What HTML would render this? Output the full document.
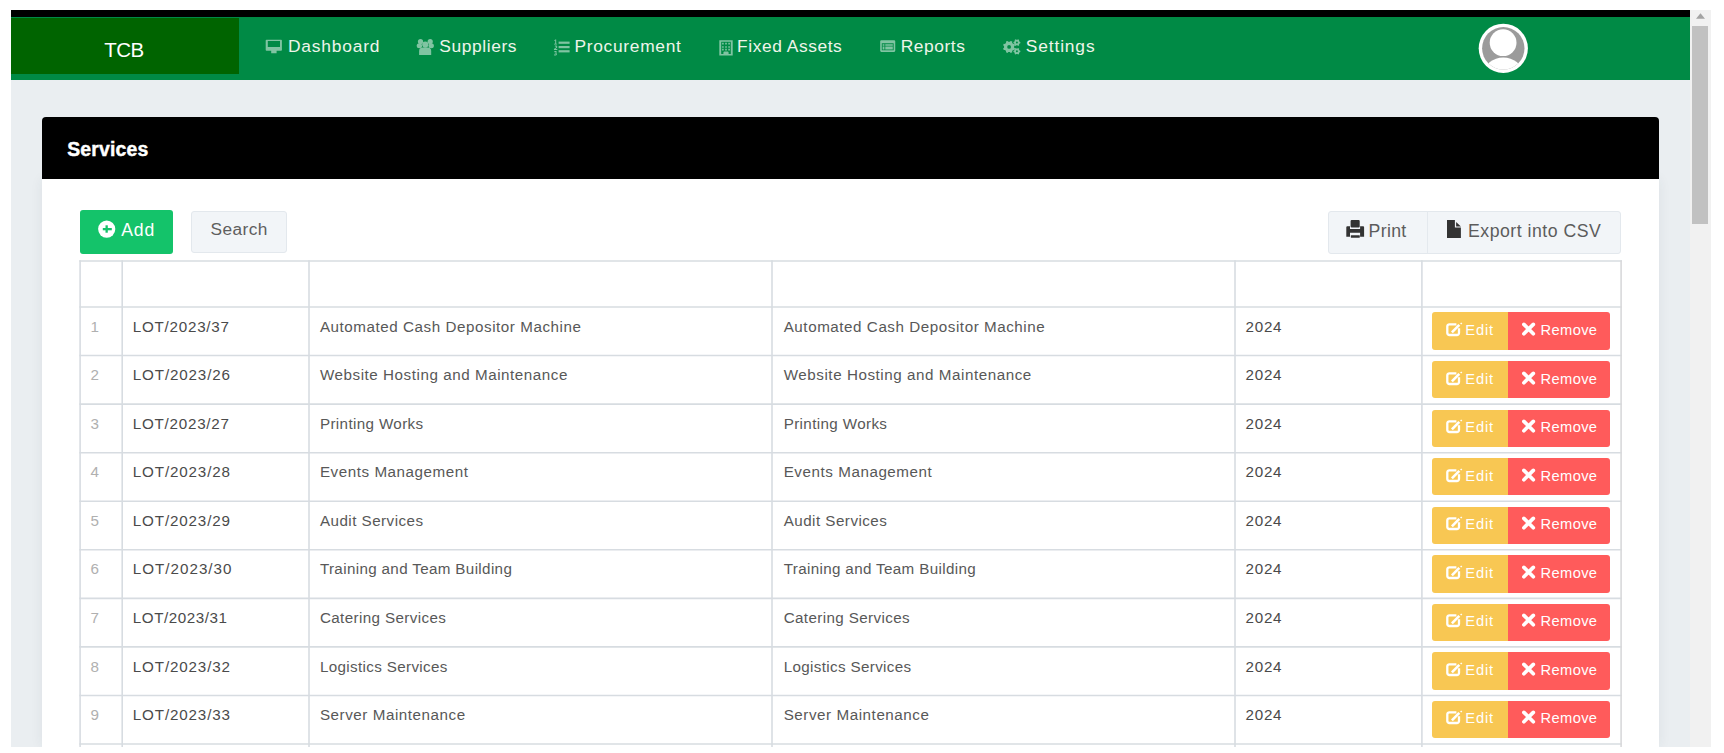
<!DOCTYPE html>
<html><head><meta charset="utf-8"><title>Services</title>
<style>
html,body{margin:0;padding:0;background:#fff;}
body{width:1724px;height:753px;overflow:hidden;position:relative;font-family:"Liberation Sans",sans-serif;}
.b{position:absolute;box-sizing:content-box;}
.t{position:absolute;white-space:nowrap;line-height:1;}
</style></head><body>
<div style="position:absolute;left:11px;top:10px;width:1700px;height:737px;overflow:hidden"><div style="position:absolute;left:-11px;top:-10px;width:1724px;height:753px">
<div class="b" style="left:11px;top:10px;width:1679px;height:7px;background:#000"></div>
<div class="b" style="left:11px;top:17px;width:1679px;height:62.5px;background:#008a45"></div>
<div class="b" style="left:11px;top:18px;width:227.5px;height:56px;background:#006400"></div>
<div class="t" style="left:104.20px;top:40.35px;font-size:20.5px;color:#ffffff;letter-spacing:-0.45px;font-weight:400;">TCB</div>
<div class="t" style="left:288.00px;top:38.07px;font-size:17.4px;color:#eef5ea;letter-spacing:0.8px;font-weight:400;">Dashboard</div>
<div class="t" style="left:439.20px;top:38.07px;font-size:17.4px;color:#eef5ea;letter-spacing:0.6px;font-weight:400;">Suppliers</div>
<div class="t" style="left:574.50px;top:38.07px;font-size:17.4px;color:#eef5ea;letter-spacing:0.68px;font-weight:400;">Procurement</div>
<div class="t" style="left:737.10px;top:38.07px;font-size:17.4px;color:#eef5ea;letter-spacing:0.55px;font-weight:400;">Fixed Assets</div>
<div class="t" style="left:900.70px;top:38.07px;font-size:17.4px;color:#eef5ea;letter-spacing:0.55px;font-weight:400;">Reports</div>
<div class="t" style="left:1025.80px;top:38.07px;font-size:17.4px;color:#eef5ea;letter-spacing:0.85px;font-weight:400;">Settings</div>
<svg class="b" style="opacity:0.5;left:265px;top:39px" width="18" height="16" viewBox="0 0 18 16"><path fill="#fff" fill-rule="evenodd" d="M1.5 0.8h14.6a0.8 0.8 0 0 1 0.8 0.8v9.4a0.8 0.8 0 0 1-0.8 0.8H11.6v2.4H6.2v-2.4H1.5a0.8 0.8 0 0 1-0.8-0.8V1.6a0.8 0.8 0 0 1 0.8-0.8zM2.8 2.1v5.9h12.2V2.1z"/></svg>
<svg class="b" style="opacity:0.5;left:410px;top:34px" width="30" height="24" viewBox="0 0 30 24"><g fill="#fff"><circle cx="10.5" cy="7.5" r="2.6"/><circle cx="20.2" cy="7.5" r="2.6"/><ellipse cx="9.4" cy="11.7" rx="2.7" ry="2.5"/><ellipse cx="21.2" cy="11.7" rx="2.7" ry="2.5"/><circle cx="15.3" cy="10.6" r="3.1"/><path d="M9.1 20.9V17.1a3.5 3.5 0 0 1 3.5-3.5h5.1a3.5 3.5 0 0 1 3.5 3.5v3.8z"/></g></svg>
<svg class="b" style="opacity:0.5;left:553px;top:39px" width="18" height="17" viewBox="0 0 18 17"><g fill="#fff"><rect x="5.6" y="2.6" width="11" height="2.2"/><rect x="5.6" y="7" width="11" height="2.2"/><rect x="5.6" y="11.2" width="11" height="2.2"/><path d="M1.2 1.3l1.2-0.8h0.8v4.3h0.9v0.8H1v-0.8h1.2V1.6l-0.9 0.5z" /><path d="M0.9 10.5c0-1.3 2.4-1.6 2.4-2.5 0-0.6-0.8-0.6-1.1-0.3l-0.6-0.7c0.8-0.9 2.7-0.5 2.7 0.9 0 1.1-1.8 1.6-2 2.2h2v0.9H0.9z"/><path d="M1 12.6c0.7-0.8 2.8-0.8 2.8 0.5 0 0.5-0.4 0.8-0.8 1 0.5 0.1 0.9 0.5 0.9 1.1 0 1.4-2.2 1.8-3.1 0.8l0.5-0.8c0.5 0.5 1.6 0.4 1.6-0.2 0-0.5-0.6-0.6-1.2-0.5v-0.7c0.6 0 1.1-0.1 1.1-0.5 0-0.5-0.9-0.5-1.4 0z"/></g></svg>
<svg class="b" style="opacity:0.5;left:719px;top:39.5px" width="14" height="16" viewBox="0 0 14 16"><path fill="#fff" fill-rule="evenodd" d="M0.3 0.2h13.4v15.3H0.3zM2.2 1.8v12.2h2.2v-1.6a1 1 0 0 1 1-1h3.2a1 1 0 0 1 1 1v1.6h2.2V1.8zM3.1 2.8h1.6v1.6H3.1zM6.2 2.8h1.6v1.6H6.2zM9.3 2.8h1.6v1.6H9.3zM3.1 6.2h1.6v1.6H3.1zM6.2 6.2h1.6v1.6H6.2zM9.3 6.2h1.6v1.6H9.3zM3.1 8.8h1.6v1.6H3.1zM6.2 8.8h1.6v1.6H6.2zM9.3 8.8h1.6v1.6H9.3z"/></svg>
<svg class="b" style="opacity:0.5;left:879.6px;top:40px" width="16" height="12.3" viewBox="0 0 17 13"><path fill="#fff" fill-rule="evenodd" d="M1.4 0.2h13.6a1.2 1.2 0 0 1 1.2 1.2v10a1.2 1.2 0 0 1-1.2 1.2H1.4A1.2 1.2 0 0 1 0.2 11.4v-10A1.2 1.2 0 0 1 1.4 0.2zM1.9 3.5v7.4h12.6V3.5zM2.8 4.6h1.9v1.4H2.8zM5.6 4.6h8v1.4h-8zM2.8 6.9h1.9v3.1H2.8zM5.6 6.9h8v3.1h-8z"/></svg>
<svg class="b" style="opacity:0.5;left:1002px;top:39px" width="20" height="17" viewBox="0 0 20 17"><g fill="#fff" fill-rule="evenodd"><path d="M12.14 8.70 L13.10 9.47 L12.45 11.04 L11.23 10.90 L10.10 12.03 L10.24 13.25 L8.67 13.90 L7.90 12.94 L6.30 12.94 L5.53 13.90 L3.96 13.25 L4.10 12.03 L2.97 10.90 L1.75 11.04 L1.10 9.47 L2.06 8.70 L2.06 7.10 L1.10 6.33 L1.75 4.76 L2.97 4.90 L4.10 3.77 L3.96 2.55 L5.53 1.90 L6.30 2.86 L7.90 2.86 L8.67 1.90 L10.24 2.55 L10.10 3.77 L11.23 4.90 L12.45 4.76 L13.10 6.33 L12.14 7.10ZM9.00 7.90A1.9 1.9 0 1 0 5.20 7.90A1.9 1.9 0 1 0 9.00 7.90Z"/><path d="M17.56 2.73 L18.34 2.96 L18.34 4.24 L17.56 4.47 L16.98 5.47 L17.17 6.26 L16.07 6.90 L15.48 6.34 L14.32 6.34 L13.73 6.90 L12.63 6.26 L12.82 5.47 L12.24 4.47 L11.46 4.24 L11.46 2.96 L12.24 2.73 L12.82 1.73 L12.63 0.94 L13.73 0.30 L14.32 0.86 L15.48 0.86 L16.07 0.30 L17.17 0.94 L16.98 1.73ZM15.90 3.60A1.0 1.0 0 1 0 13.90 3.60A1.0 1.0 0 1 0 15.90 3.60Z"/><path d="M17.56 11.43 L18.34 11.66 L18.34 12.94 L17.56 13.17 L16.98 14.17 L17.17 14.96 L16.07 15.60 L15.48 15.04 L14.32 15.04 L13.73 15.60 L12.63 14.96 L12.82 14.17 L12.24 13.17 L11.46 12.94 L11.46 11.66 L12.24 11.43 L12.82 10.43 L12.63 9.64 L13.73 9.00 L14.32 9.56 L15.48 9.56 L16.07 9.00 L17.17 9.64 L16.98 10.43ZM15.90 12.30A1.0 1.0 0 1 0 13.90 12.30A1.0 1.0 0 1 0 15.90 12.30Z"/></g></svg>
<svg class="b" style="left:1478px;top:23px" width="51" height="51" viewBox="0 0 51 51"><defs><clipPath id="cc"><circle cx="25.3" cy="25.3" r="21.2"/></clipPath></defs><circle cx="25.3" cy="25.3" r="24.6" fill="#fff"/><circle cx="25.3" cy="25.3" r="21.2" fill="#9b9b9b"/><g clip-path="url(#cc)" fill="#fff"><circle cx="25.1" cy="19.7" r="13.4"/><ellipse cx="25.3" cy="50" rx="19" ry="15.5"/></g></svg>
<div class="b" style="left:11px;top:79.5px;width:1679px;height:667.5px;background:#eaeef1"></div>
<div class="b" style="left:42px;top:179px;width:1617px;height:568px;background:#fff;box-shadow:0 0 12px rgba(40,50,70,0.07)"></div>
<div class="b" style="left:42px;top:117px;width:1617px;height:62px;background:#000;border-radius:4px 4px 0 0"></div>
<div class="t" style="left:67.20px;top:139.68px;font-size:19.4px;color:#fff;letter-spacing:0.2px;font-weight:700;-webkit-text-stroke:0.45px #fff;">Services</div>
<div class="b" style="left:80px;top:210.2px;width:93px;height:43.8px;background:#14c36a;border-radius:3px"></div>
<svg class="b" style="left:98px;top:220px" width="18" height="18" viewBox="0 0 18 18"><circle cx="8.7" cy="9.1" r="8.6" fill="#fff"/><rect x="4.8" y="8" width="9" height="2.3" fill="#14c36a"/><rect x="7.5" y="5.3" width="2.3" height="7.4" fill="#14c36a"/></svg>
<div class="t" style="left:121.20px;top:221.70px;font-size:17.6px;color:#fff;letter-spacing:0.9px;font-weight:400;">Add</div>
<div class="b" style="left:191.2px;top:210.5px;width:94px;height:40.5px;background:#f2f5f8;border:1px solid #e3e8ed;border-radius:3px"></div>
<div class="t" style="left:210.60px;top:220.96px;font-size:17.3px;color:#5e5e5e;letter-spacing:0.4px;font-weight:400;">Search</div>
<div class="b" style="left:1328px;top:210.5px;width:291px;height:41px;background:#f2f5f8;border:1px solid #e3e8ed;border-radius:3px"></div>
<div class="b" style="left:1426.5px;top:211px;width:1px;height:42px;background:#e4e9ee"></div>
<svg class="b" style="left:1342px;top:216px" width="25" height="25" viewBox="0 0 25 25"><g fill="#333"><rect x="8.6" y="4" width="9.1" height="7.4" rx="1"/><path d="M5.3 10.3h2.7v2.6h10.1v-2.6h3a1 1 0 0 1 1 1v9.4h-4v-4H8v4H4.3v-9.4a1 1 0 0 1 1-1z"/><rect x="8.8" y="19.3" width="9" height="2.4" rx="0.4"/></g></svg>
<div class="t" style="left:1368.50px;top:222.52px;font-size:17.7px;color:#5c5c5c;letter-spacing:0.35px;font-weight:400;">Print</div>
<svg class="b" style="left:1441px;top:216px" width="25" height="25" viewBox="0 0 25 25"><g fill="#333"><path d="M6 4h7.9v7.6h6v10.3H6z"/><path d="M15.1 5.9l4.8 4.7h-4.8z"/></g></svg>
<div class="t" style="left:1468.00px;top:222.52px;font-size:17.7px;color:#5c5c5c;letter-spacing:0.5px;font-weight:400;">Export into CSV</div>
<svg class="b" style="left:0;top:0" width="1724" height="753" viewBox="0 0 1724 753"><g fill="none" stroke="#d7dce1" stroke-width="1.6"><path d="M80.10 260.2V760"/><path d="M122.20 260.2V760"/><path d="M309.00 260.2V760"/><path d="M772.00 260.2V760"/><path d="M1235.00 260.2V760"/><path d="M1421.90 260.2V760"/><path d="M79.3 261.00H1621.9"/><path d="M79.3 307.00H1621.9"/><path d="M79.3 355.56H1621.9"/><path d="M79.3 404.12H1621.9"/><path d="M79.3 452.68H1621.9"/><path d="M79.3 501.24H1621.9"/><path d="M79.3 549.80H1621.9"/><path d="M79.3 598.36H1621.9"/><path d="M79.3 646.92H1621.9"/><path d="M79.3 695.48H1621.9"/><path d="M79.3 744.04H1621.9"/></g><path d="M1621.1 260.2V760" stroke="#d8d9db" stroke-width="1.6" fill="none"/></svg>
<div class="t" style="left:90.50px;top:318.63px;font-size:15.2px;color:#b0b0b0;letter-spacing:0.3px;font-weight:400;">1</div>
<div class="t" style="left:132.80px;top:318.63px;font-size:15.2px;color:#4a4a4a;letter-spacing:0.75px;font-weight:400;">LOT/2023/37</div>
<div class="t" style="left:319.90px;top:318.63px;font-size:15.2px;color:#585858;letter-spacing:0.55px;font-weight:400;">Automated Cash Depositor Machine</div>
<div class="t" style="left:783.70px;top:318.63px;font-size:15.2px;color:#585858;letter-spacing:0.55px;font-weight:400;">Automated Cash Depositor Machine</div>
<div class="t" style="left:1245.60px;top:318.63px;font-size:15.2px;color:#4a4a4a;letter-spacing:0.7px;font-weight:400;">2024</div>
<div class="b" style="left:1432px;top:312.40px;width:76px;height:37.4px;background:#f8c753;border-radius:3px 0 0 3px"></div>
<div class="b" style="left:1508px;top:312.40px;width:102px;height:37.4px;background:#ff5b5b;border-radius:0 3px 3px 0"></div>
<svg class="b" style="left:1441px;top:317.00px" width="25" height="25" viewBox="0 0 25 25"><path d="M15.4 7.3H8.4a2.1 2.1 0 0 0-2.1 2.1v6.5a2.1 2.1 0 0 0 2.1 2.1h7.5a2.1 2.1 0 0 0 2.1-2.1V11.2" fill="none" stroke="#fff" stroke-width="2.3"/><path d="M10.9 15.3L18.3 7.9" stroke="#fff" stroke-width="2.6"/><path d="M19.1 6.5l1.1-1.1 1.1 1.1-1.1 1.1z" fill="#fff"/></svg>
<div class="t" style="left:1465.20px;top:322.96px;font-size:14.7px;color:#fff;letter-spacing:0.9px;font-weight:400;">Edit</div>
<svg class="b" style="left:1516px;top:317.00px" width="25" height="25" viewBox="0 0 25 25"><g stroke="#fff" stroke-width="3.7" stroke-linecap="round"><path d="M7.9 7.4L17.3 16.7M17.3 7.4L7.9 16.7"/></g></svg>
<div class="t" style="left:1540.60px;top:322.96px;font-size:14.7px;color:#fff;letter-spacing:0.35px;font-weight:400;">Remove</div>
<div class="t" style="left:90.50px;top:367.19px;font-size:15.2px;color:#b0b0b0;letter-spacing:0.3px;font-weight:400;">2</div>
<div class="t" style="left:132.80px;top:367.19px;font-size:15.2px;color:#4a4a4a;letter-spacing:0.85px;font-weight:400;">LOT/2023/26</div>
<div class="t" style="left:319.90px;top:367.19px;font-size:15.2px;color:#585858;letter-spacing:0.55px;font-weight:400;">Website Hosting and Maintenance</div>
<div class="t" style="left:783.70px;top:367.19px;font-size:15.2px;color:#585858;letter-spacing:0.55px;font-weight:400;">Website Hosting and Maintenance</div>
<div class="t" style="left:1245.60px;top:367.19px;font-size:15.2px;color:#4a4a4a;letter-spacing:0.7px;font-weight:400;">2024</div>
<div class="b" style="left:1432px;top:360.96px;width:76px;height:37.4px;background:#f8c753;border-radius:3px 0 0 3px"></div>
<div class="b" style="left:1508px;top:360.96px;width:102px;height:37.4px;background:#ff5b5b;border-radius:0 3px 3px 0"></div>
<svg class="b" style="left:1441px;top:365.56px" width="25" height="25" viewBox="0 0 25 25"><path d="M15.4 7.3H8.4a2.1 2.1 0 0 0-2.1 2.1v6.5a2.1 2.1 0 0 0 2.1 2.1h7.5a2.1 2.1 0 0 0 2.1-2.1V11.2" fill="none" stroke="#fff" stroke-width="2.3"/><path d="M10.9 15.3L18.3 7.9" stroke="#fff" stroke-width="2.6"/><path d="M19.1 6.5l1.1-1.1 1.1 1.1-1.1 1.1z" fill="#fff"/></svg>
<div class="t" style="left:1465.20px;top:371.52px;font-size:14.7px;color:#fff;letter-spacing:0.9px;font-weight:400;">Edit</div>
<svg class="b" style="left:1516px;top:365.56px" width="25" height="25" viewBox="0 0 25 25"><g stroke="#fff" stroke-width="3.7" stroke-linecap="round"><path d="M7.9 7.4L17.3 16.7M17.3 7.4L7.9 16.7"/></g></svg>
<div class="t" style="left:1540.60px;top:371.52px;font-size:14.7px;color:#fff;letter-spacing:0.35px;font-weight:400;">Remove</div>
<div class="t" style="left:90.50px;top:415.75px;font-size:15.2px;color:#b0b0b0;letter-spacing:0.3px;font-weight:400;">3</div>
<div class="t" style="left:132.80px;top:415.75px;font-size:15.2px;color:#4a4a4a;letter-spacing:0.75px;font-weight:400;">LOT/2023/27</div>
<div class="t" style="left:319.90px;top:415.75px;font-size:15.2px;color:#585858;letter-spacing:0.37px;font-weight:400;">Printing Works</div>
<div class="t" style="left:783.70px;top:415.75px;font-size:15.2px;color:#585858;letter-spacing:0.37px;font-weight:400;">Printing Works</div>
<div class="t" style="left:1245.60px;top:415.75px;font-size:15.2px;color:#4a4a4a;letter-spacing:0.7px;font-weight:400;">2024</div>
<div class="b" style="left:1432px;top:409.52px;width:76px;height:37.4px;background:#f8c753;border-radius:3px 0 0 3px"></div>
<div class="b" style="left:1508px;top:409.52px;width:102px;height:37.4px;background:#ff5b5b;border-radius:0 3px 3px 0"></div>
<svg class="b" style="left:1441px;top:414.12px" width="25" height="25" viewBox="0 0 25 25"><path d="M15.4 7.3H8.4a2.1 2.1 0 0 0-2.1 2.1v6.5a2.1 2.1 0 0 0 2.1 2.1h7.5a2.1 2.1 0 0 0 2.1-2.1V11.2" fill="none" stroke="#fff" stroke-width="2.3"/><path d="M10.9 15.3L18.3 7.9" stroke="#fff" stroke-width="2.6"/><path d="M19.1 6.5l1.1-1.1 1.1 1.1-1.1 1.1z" fill="#fff"/></svg>
<div class="t" style="left:1465.20px;top:420.08px;font-size:14.7px;color:#fff;letter-spacing:0.9px;font-weight:400;">Edit</div>
<svg class="b" style="left:1516px;top:414.12px" width="25" height="25" viewBox="0 0 25 25"><g stroke="#fff" stroke-width="3.7" stroke-linecap="round"><path d="M7.9 7.4L17.3 16.7M17.3 7.4L7.9 16.7"/></g></svg>
<div class="t" style="left:1540.60px;top:420.08px;font-size:14.7px;color:#fff;letter-spacing:0.35px;font-weight:400;">Remove</div>
<div class="t" style="left:90.50px;top:464.31px;font-size:15.2px;color:#b0b0b0;letter-spacing:0.3px;font-weight:400;">4</div>
<div class="t" style="left:132.80px;top:464.31px;font-size:15.2px;color:#4a4a4a;letter-spacing:0.85px;font-weight:400;">LOT/2023/28</div>
<div class="t" style="left:319.90px;top:464.31px;font-size:15.2px;color:#585858;letter-spacing:0.55px;font-weight:400;">Events Management</div>
<div class="t" style="left:783.70px;top:464.31px;font-size:15.2px;color:#585858;letter-spacing:0.55px;font-weight:400;">Events Management</div>
<div class="t" style="left:1245.60px;top:464.31px;font-size:15.2px;color:#4a4a4a;letter-spacing:0.7px;font-weight:400;">2024</div>
<div class="b" style="left:1432px;top:458.08px;width:76px;height:37.4px;background:#f8c753;border-radius:3px 0 0 3px"></div>
<div class="b" style="left:1508px;top:458.08px;width:102px;height:37.4px;background:#ff5b5b;border-radius:0 3px 3px 0"></div>
<svg class="b" style="left:1441px;top:462.68px" width="25" height="25" viewBox="0 0 25 25"><path d="M15.4 7.3H8.4a2.1 2.1 0 0 0-2.1 2.1v6.5a2.1 2.1 0 0 0 2.1 2.1h7.5a2.1 2.1 0 0 0 2.1-2.1V11.2" fill="none" stroke="#fff" stroke-width="2.3"/><path d="M10.9 15.3L18.3 7.9" stroke="#fff" stroke-width="2.6"/><path d="M19.1 6.5l1.1-1.1 1.1 1.1-1.1 1.1z" fill="#fff"/></svg>
<div class="t" style="left:1465.20px;top:468.64px;font-size:14.7px;color:#fff;letter-spacing:0.9px;font-weight:400;">Edit</div>
<svg class="b" style="left:1516px;top:462.68px" width="25" height="25" viewBox="0 0 25 25"><g stroke="#fff" stroke-width="3.7" stroke-linecap="round"><path d="M7.9 7.4L17.3 16.7M17.3 7.4L7.9 16.7"/></g></svg>
<div class="t" style="left:1540.60px;top:468.64px;font-size:14.7px;color:#fff;letter-spacing:0.35px;font-weight:400;">Remove</div>
<div class="t" style="left:90.50px;top:512.87px;font-size:15.2px;color:#b0b0b0;letter-spacing:0.3px;font-weight:400;">5</div>
<div class="t" style="left:132.80px;top:512.87px;font-size:15.2px;color:#4a4a4a;letter-spacing:0.85px;font-weight:400;">LOT/2023/29</div>
<div class="t" style="left:319.90px;top:512.87px;font-size:15.2px;color:#585858;letter-spacing:0.47px;font-weight:400;">Audit Services</div>
<div class="t" style="left:783.70px;top:512.87px;font-size:15.2px;color:#585858;letter-spacing:0.47px;font-weight:400;">Audit Services</div>
<div class="t" style="left:1245.60px;top:512.87px;font-size:15.2px;color:#4a4a4a;letter-spacing:0.7px;font-weight:400;">2024</div>
<div class="b" style="left:1432px;top:506.64px;width:76px;height:37.4px;background:#f8c753;border-radius:3px 0 0 3px"></div>
<div class="b" style="left:1508px;top:506.64px;width:102px;height:37.4px;background:#ff5b5b;border-radius:0 3px 3px 0"></div>
<svg class="b" style="left:1441px;top:511.24px" width="25" height="25" viewBox="0 0 25 25"><path d="M15.4 7.3H8.4a2.1 2.1 0 0 0-2.1 2.1v6.5a2.1 2.1 0 0 0 2.1 2.1h7.5a2.1 2.1 0 0 0 2.1-2.1V11.2" fill="none" stroke="#fff" stroke-width="2.3"/><path d="M10.9 15.3L18.3 7.9" stroke="#fff" stroke-width="2.6"/><path d="M19.1 6.5l1.1-1.1 1.1 1.1-1.1 1.1z" fill="#fff"/></svg>
<div class="t" style="left:1465.20px;top:517.20px;font-size:14.7px;color:#fff;letter-spacing:0.9px;font-weight:400;">Edit</div>
<svg class="b" style="left:1516px;top:511.24px" width="25" height="25" viewBox="0 0 25 25"><g stroke="#fff" stroke-width="3.7" stroke-linecap="round"><path d="M7.9 7.4L17.3 16.7M17.3 7.4L7.9 16.7"/></g></svg>
<div class="t" style="left:1540.60px;top:517.20px;font-size:14.7px;color:#fff;letter-spacing:0.35px;font-weight:400;">Remove</div>
<div class="t" style="left:90.50px;top:561.43px;font-size:15.2px;color:#b0b0b0;letter-spacing:0.3px;font-weight:400;">6</div>
<div class="t" style="left:132.80px;top:561.43px;font-size:15.2px;color:#4a4a4a;letter-spacing:1.0px;font-weight:400;">LOT/2023/30</div>
<div class="t" style="left:319.90px;top:561.43px;font-size:15.2px;color:#585858;letter-spacing:0.35px;font-weight:400;">Training and Team Building</div>
<div class="t" style="left:783.70px;top:561.43px;font-size:15.2px;color:#585858;letter-spacing:0.35px;font-weight:400;">Training and Team Building</div>
<div class="t" style="left:1245.60px;top:561.43px;font-size:15.2px;color:#4a4a4a;letter-spacing:0.7px;font-weight:400;">2024</div>
<div class="b" style="left:1432px;top:555.20px;width:76px;height:37.4px;background:#f8c753;border-radius:3px 0 0 3px"></div>
<div class="b" style="left:1508px;top:555.20px;width:102px;height:37.4px;background:#ff5b5b;border-radius:0 3px 3px 0"></div>
<svg class="b" style="left:1441px;top:559.80px" width="25" height="25" viewBox="0 0 25 25"><path d="M15.4 7.3H8.4a2.1 2.1 0 0 0-2.1 2.1v6.5a2.1 2.1 0 0 0 2.1 2.1h7.5a2.1 2.1 0 0 0 2.1-2.1V11.2" fill="none" stroke="#fff" stroke-width="2.3"/><path d="M10.9 15.3L18.3 7.9" stroke="#fff" stroke-width="2.6"/><path d="M19.1 6.5l1.1-1.1 1.1 1.1-1.1 1.1z" fill="#fff"/></svg>
<div class="t" style="left:1465.20px;top:565.76px;font-size:14.7px;color:#fff;letter-spacing:0.9px;font-weight:400;">Edit</div>
<svg class="b" style="left:1516px;top:559.80px" width="25" height="25" viewBox="0 0 25 25"><g stroke="#fff" stroke-width="3.7" stroke-linecap="round"><path d="M7.9 7.4L17.3 16.7M17.3 7.4L7.9 16.7"/></g></svg>
<div class="t" style="left:1540.60px;top:565.76px;font-size:14.7px;color:#fff;letter-spacing:0.35px;font-weight:400;">Remove</div>
<div class="t" style="left:90.50px;top:609.99px;font-size:15.2px;color:#b0b0b0;letter-spacing:0.3px;font-weight:400;">7</div>
<div class="t" style="left:132.80px;top:609.99px;font-size:15.2px;color:#4a4a4a;letter-spacing:0.55px;font-weight:400;">LOT/2023/31</div>
<div class="t" style="left:319.90px;top:609.99px;font-size:15.2px;color:#585858;letter-spacing:0.38px;font-weight:400;">Catering Services</div>
<div class="t" style="left:783.70px;top:609.99px;font-size:15.2px;color:#585858;letter-spacing:0.38px;font-weight:400;">Catering Services</div>
<div class="t" style="left:1245.60px;top:609.99px;font-size:15.2px;color:#4a4a4a;letter-spacing:0.7px;font-weight:400;">2024</div>
<div class="b" style="left:1432px;top:603.76px;width:76px;height:37.4px;background:#f8c753;border-radius:3px 0 0 3px"></div>
<div class="b" style="left:1508px;top:603.76px;width:102px;height:37.4px;background:#ff5b5b;border-radius:0 3px 3px 0"></div>
<svg class="b" style="left:1441px;top:608.36px" width="25" height="25" viewBox="0 0 25 25"><path d="M15.4 7.3H8.4a2.1 2.1 0 0 0-2.1 2.1v6.5a2.1 2.1 0 0 0 2.1 2.1h7.5a2.1 2.1 0 0 0 2.1-2.1V11.2" fill="none" stroke="#fff" stroke-width="2.3"/><path d="M10.9 15.3L18.3 7.9" stroke="#fff" stroke-width="2.6"/><path d="M19.1 6.5l1.1-1.1 1.1 1.1-1.1 1.1z" fill="#fff"/></svg>
<div class="t" style="left:1465.20px;top:614.32px;font-size:14.7px;color:#fff;letter-spacing:0.9px;font-weight:400;">Edit</div>
<svg class="b" style="left:1516px;top:608.36px" width="25" height="25" viewBox="0 0 25 25"><g stroke="#fff" stroke-width="3.7" stroke-linecap="round"><path d="M7.9 7.4L17.3 16.7M17.3 7.4L7.9 16.7"/></g></svg>
<div class="t" style="left:1540.60px;top:614.32px;font-size:14.7px;color:#fff;letter-spacing:0.35px;font-weight:400;">Remove</div>
<div class="t" style="left:90.50px;top:658.55px;font-size:15.2px;color:#b0b0b0;letter-spacing:0.3px;font-weight:400;">8</div>
<div class="t" style="left:132.80px;top:658.55px;font-size:15.2px;color:#4a4a4a;letter-spacing:0.85px;font-weight:400;">LOT/2023/32</div>
<div class="t" style="left:319.90px;top:658.55px;font-size:15.2px;color:#585858;letter-spacing:0.35px;font-weight:400;">Logistics Services</div>
<div class="t" style="left:783.70px;top:658.55px;font-size:15.2px;color:#585858;letter-spacing:0.35px;font-weight:400;">Logistics Services</div>
<div class="t" style="left:1245.60px;top:658.55px;font-size:15.2px;color:#4a4a4a;letter-spacing:0.7px;font-weight:400;">2024</div>
<div class="b" style="left:1432px;top:652.32px;width:76px;height:37.4px;background:#f8c753;border-radius:3px 0 0 3px"></div>
<div class="b" style="left:1508px;top:652.32px;width:102px;height:37.4px;background:#ff5b5b;border-radius:0 3px 3px 0"></div>
<svg class="b" style="left:1441px;top:656.92px" width="25" height="25" viewBox="0 0 25 25"><path d="M15.4 7.3H8.4a2.1 2.1 0 0 0-2.1 2.1v6.5a2.1 2.1 0 0 0 2.1 2.1h7.5a2.1 2.1 0 0 0 2.1-2.1V11.2" fill="none" stroke="#fff" stroke-width="2.3"/><path d="M10.9 15.3L18.3 7.9" stroke="#fff" stroke-width="2.6"/><path d="M19.1 6.5l1.1-1.1 1.1 1.1-1.1 1.1z" fill="#fff"/></svg>
<div class="t" style="left:1465.20px;top:662.88px;font-size:14.7px;color:#fff;letter-spacing:0.9px;font-weight:400;">Edit</div>
<svg class="b" style="left:1516px;top:656.92px" width="25" height="25" viewBox="0 0 25 25"><g stroke="#fff" stroke-width="3.7" stroke-linecap="round"><path d="M7.9 7.4L17.3 16.7M17.3 7.4L7.9 16.7"/></g></svg>
<div class="t" style="left:1540.60px;top:662.88px;font-size:14.7px;color:#fff;letter-spacing:0.35px;font-weight:400;">Remove</div>
<div class="t" style="left:90.50px;top:707.11px;font-size:15.2px;color:#b0b0b0;letter-spacing:0.3px;font-weight:400;">9</div>
<div class="t" style="left:132.80px;top:707.11px;font-size:15.2px;color:#4a4a4a;letter-spacing:0.85px;font-weight:400;">LOT/2023/33</div>
<div class="t" style="left:319.90px;top:707.11px;font-size:15.2px;color:#585858;letter-spacing:0.55px;font-weight:400;">Server Maintenance</div>
<div class="t" style="left:783.70px;top:707.11px;font-size:15.2px;color:#585858;letter-spacing:0.55px;font-weight:400;">Server Maintenance</div>
<div class="t" style="left:1245.60px;top:707.11px;font-size:15.2px;color:#4a4a4a;letter-spacing:0.7px;font-weight:400;">2024</div>
<div class="b" style="left:1432px;top:700.88px;width:76px;height:37.4px;background:#f8c753;border-radius:3px 0 0 3px"></div>
<div class="b" style="left:1508px;top:700.88px;width:102px;height:37.4px;background:#ff5b5b;border-radius:0 3px 3px 0"></div>
<svg class="b" style="left:1441px;top:705.48px" width="25" height="25" viewBox="0 0 25 25"><path d="M15.4 7.3H8.4a2.1 2.1 0 0 0-2.1 2.1v6.5a2.1 2.1 0 0 0 2.1 2.1h7.5a2.1 2.1 0 0 0 2.1-2.1V11.2" fill="none" stroke="#fff" stroke-width="2.3"/><path d="M10.9 15.3L18.3 7.9" stroke="#fff" stroke-width="2.6"/><path d="M19.1 6.5l1.1-1.1 1.1 1.1-1.1 1.1z" fill="#fff"/></svg>
<div class="t" style="left:1465.20px;top:711.44px;font-size:14.7px;color:#fff;letter-spacing:0.9px;font-weight:400;">Edit</div>
<svg class="b" style="left:1516px;top:705.48px" width="25" height="25" viewBox="0 0 25 25"><g stroke="#fff" stroke-width="3.7" stroke-linecap="round"><path d="M7.9 7.4L17.3 16.7M17.3 7.4L7.9 16.7"/></g></svg>
<div class="t" style="left:1540.60px;top:711.44px;font-size:14.7px;color:#fff;letter-spacing:0.35px;font-weight:400;">Remove</div>
<div class="b" style="left:1690px;top:10px;width:21px;height:737px;background:#f1f1f1"></div>
<svg class="b" style="left:1695px;top:12px" width="11" height="8" viewBox="0 0 11 8"><path d="M5.5 1.3L10 6.7H1z" fill="#a3a3a3"/></svg>
<div class="b" style="left:1692px;top:26px;width:16.3px;height:198px;background:#c1c1c1"></div>
</div></div>
</body></html>
